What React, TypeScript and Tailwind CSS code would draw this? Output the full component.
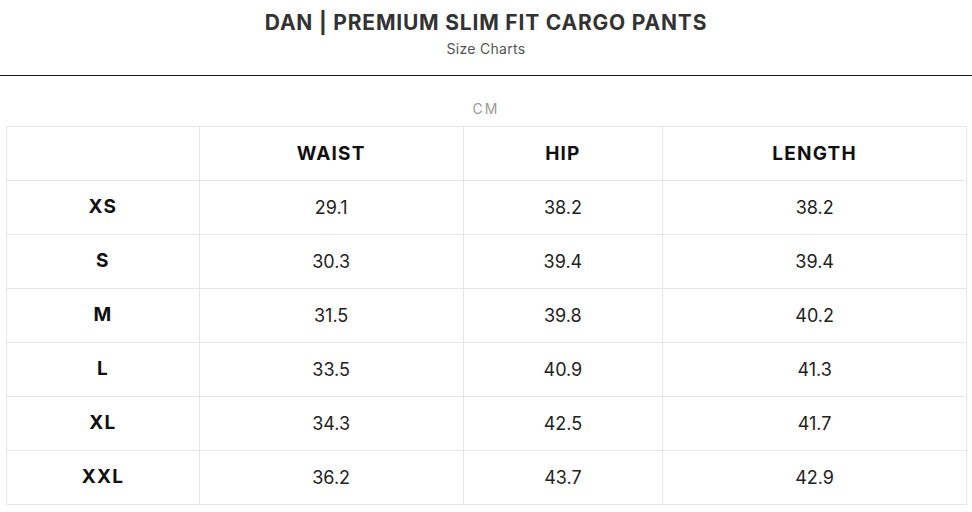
import React from 'react';

// Size chart rows, values in cm
const ROWS = [
    { size: 'XS', waist: '29.1', hip: '38.2', length: '38.2' },
    { size: 'S', waist: '30.3', hip: '39.4', length: '39.4' },
    { size: 'M', waist: '31.5', hip: '39.8', length: '40.2' },
    { size: 'L', waist: '33.5', hip: '40.9', length: '41.3' },
    { size: 'XL', waist: '34.3', hip: '42.5', length: '41.7' },
    { size: 'XXL', waist: '36.2', hip: '43.7', length: '42.9' },
];

export default function App() {
    return (
        <div className="w-[972px] h-[512px] bg-white overflow-hidden" style={{ fontFamily: 'Inter, "Open Sans", sans-serif' }}>
            {/* Header */}
            <div className="h-[76px] border-b border-[#1a1a1a] flex flex-col items-center pt-[10px]">
                <h1 className="text-[21px] leading-[25px] font-bold text-[#333] tracking-[0.8px]">DAN | PREMIUM SLIM FIT CARGO PANTS</h1>
                <p className="text-[14px] leading-[18px] mt-[5px] text-[#555] tracking-[0.3px]">Size Charts</p>
            </div>

            <div className="text-center text-[14px] leading-[18px] text-[#999] tracking-[2px] mt-[24px] mb-[8px]">CM</div>

            <table className="ml-[6px] w-[961px] border-collapse text-center text-[18px] text-[#111]">
                <thead>
                    <tr className="h-[54px]">
                        <th className="w-[193px] border border-[#e6e6e6]"></th>
                        <th className="w-[264px] border border-[#e6e6e6] font-bold text-[19px] tracking-[1.2px] pt-[2px]">WAIST</th>
                        <th className="w-[200px] border border-[#e6e6e6] font-bold text-[19px] tracking-[1.2px] pt-[2px]">HIP</th>
                        <th className="w-[304px] border border-[#e6e6e6] font-bold text-[19px] tracking-[1.2px] pt-[2px]">LENGTH</th>
                    </tr>
                </thead>
                <tbody>
                    {ROWS.map((r) => (
                        <tr key={r.size} className="h-[54px]">
                            <td className="border border-[#e6e6e6] font-bold text-[19px] tracking-[1.2px]">{r.size}</td>
                            <td className="border border-[#e6e6e6] text-[#222]">{r.waist}</td>
                            <td className="border border-[#e6e6e6] text-[#222]">{r.hip}</td>
                            <td className="border border-[#e6e6e6] text-[#222]">{r.length}</td>
                        </tr>
                    ))}
                </tbody>
            </table>
        </div>
    );
}
